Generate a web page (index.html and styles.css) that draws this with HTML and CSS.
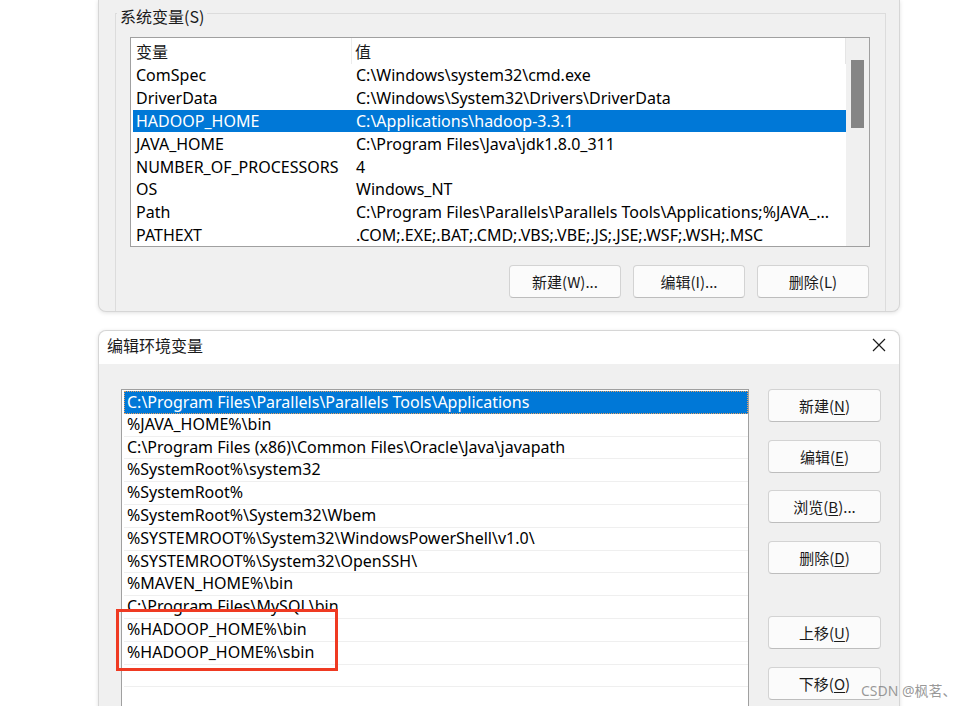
FILE: index.html
```html
<!DOCTYPE html>
<html lang="zh-CN">
<head>
<meta charset="utf-8">
<title>环境变量</title>
<link rel="stylesheet" href="styles.css">
</head>
<body>
<div class="page">
  <div class="win win-top">
    <fieldset class="group">
      <legend class="group-label">系统变量(S)</legend>
      <div class="listview">
        <div class="lv-main">
          <div class="lv-head"><span class="c1">变量</span><span class="c2">值</span></div>
          <div class="lv-row"><span class="c1">ComSpec</span><span class="c2">C:\Windows\system32\cmd.exe</span></div>
          <div class="lv-row"><span class="c1">DriverData</span><span class="c2">C:\Windows\System32\Drivers\DriverData</span></div>
          <div class="lv-row selected"><span class="c1">HADOOP_HOME</span><span class="c2">C:\Applications\hadoop-3.3.1</span></div>
          <div class="lv-row"><span class="c1">JAVA_HOME</span><span class="c2">C:\Program Files\Java\jdk1.8.0_311</span></div>
          <div class="lv-row"><span class="c1">NUMBER_OF_PROCESSORS</span><span class="c2">4</span></div>
          <div class="lv-row"><span class="c1">OS</span><span class="c2">Windows_NT</span></div>
          <div class="lv-row"><span class="c1">Path</span><span class="c2">C:\Program Files\Parallels\Parallels Tools\Applications;%JAVA_...</span></div>
          <div class="lv-row"><span class="c1">PATHEXT</span><span class="c2">.COM;.EXE;.BAT;.CMD;.VBS;.VBE;.JS;.JSE;.WSF;.WSH;.MSC</span></div>
        </div>
        <div class="vscroll"><div class="thumb"></div></div>
      </div>
      <div class="btn-row">
        <button class="btn">新建(W)...</button>
        <button class="btn">编辑(I)...</button>
        <button class="btn">删除(L)</button>
      </div>
    </fieldset>
  </div>

  <div class="win win-bottom">
    <div class="titlebar">
      <span class="title">编辑环境变量</span>
      <svg class="close" width="14" height="14" viewBox="0 0 14 14"><path d="M1 1 L13 13 M13 1 L1 13" stroke="#1a1a1a" stroke-width="1.2" fill="none"/></svg>
    </div>
    <div class="dlg-body">
      <div class="pathlist">
        <div class="p-row selected">C:\Program Files\Parallels\Parallels Tools\Applications</div>
        <div class="p-row">%JAVA_HOME%\bin</div>
        <div class="p-row">C:\Program Files (x86)\Common Files\Oracle\Java\javapath</div>
        <div class="p-row">%SystemRoot%\system32</div>
        <div class="p-row">%SystemRoot%</div>
        <div class="p-row">%SystemRoot%\System32\Wbem</div>
        <div class="p-row">%SYSTEMROOT%\System32\WindowsPowerShell\v1.0\</div>
        <div class="p-row">%SYSTEMROOT%\System32\OpenSSH\</div>
        <div class="p-row">%MAVEN_HOME%\bin</div>
        <div class="p-row">C:\Program Files\MySQL\bin</div>
        <div class="p-row">%HADOOP_HOME%\bin</div>
        <div class="p-row">%HADOOP_HOME%\sbin</div>
        <div class="p-row"></div>
        <div class="p-row"></div>
      </div>
      <div class="side-btns">
        <button class="btn">新建(<u>N</u>)</button>
        <button class="btn">编辑(<u>E</u>)</button>
        <button class="btn">浏览(<u>B</u>)...</button>
        <button class="btn">删除(<u>D</u>)</button>
        <button class="btn gap-before">上移(<u>U</u>)</button>
        <button class="btn">下移(<u>O</u>)</button>
      </div>
    </div>
    <div class="highlight"></div>
  </div>

  <div class="watermark">CSDN @枫茗、</div>
</div>
</body>
</html>
```

FILE: styles.css
```css
* { box-sizing: border-box; }

html, body {
  margin: 0;
  padding: 0;
  background: #ffffff;
}

body {
  font-family: "Noto Sans", "Noto Sans CJK SC", sans-serif;
  font-size: 16px;
  color: #000;
}

.page {
  position: relative;
  width: 965px;
  height: 706px;
  overflow: hidden;
  display: flex;
  flex-direction: column;
  gap: 18px;
}

.win {
  margin-left: 98px;
  width: 802px;
  background: #f0f0f0;
  border: 1px solid #d6d6d6;
  box-shadow: 0 1px 4px rgba(0,0,0,0.12);
}

.win-top {
  height: 312px;
  flex: none;
  border-top: none;
  border-radius: 0 0 8px 8px;
  padding: 0 13px 0 16px;
  overflow: hidden;
}

.group {
  margin: 0;
  height: 320px;
  border: 1px solid #dcdcdc;
  border-bottom: none;
  padding: 11px 15px 0 14px;
  min-width: 0;
}

.group-label {
  margin-left: -13px;
  padding: 6px 3px 0 3px;
  height: 26px;
  line-height: 20px;
  font-family: "Noto Sans CJK SC", "Noto Sans", sans-serif;
  color: #1a1a1a;
}

.listview {
  display: flex;
  height: 210px;
  background: #fff;
  border: 1px solid #a0a0a0;
}

.lv-main {
  flex: 1;
  min-width: 0;
  padding-left: 2px;
}

.lv-head {
  display: flex;
  align-items: center;
  height: 26px;
  margin-left: -2px;
  padding-left: 5px;
  border-right: 1px solid #e5e5e5;
  color: #1a1a1a;
}

.lv-head .c1 {
  font-family: "Noto Sans CJK SC", sans-serif;
  border-right: 1px solid #ececec;
  height: 26px;
  line-height: 26px;
  width: 216px;
  flex: none;
}

.lv-head .c2 {
  font-family: "Noto Sans CJK SC", sans-serif;
  padding-left: 3px;
}

.lv-row {
  display: flex;
  align-items: center;
  height: 22.8px;
  padding-left: 3px;
  white-space: nowrap;
  overflow: hidden;
}

.lv-row .c1 {
  width: 220px;
  flex: none;
}

.lv-row.selected {
  background: #0078d7;
  color: #fff;
}

.vscroll {
  width: 23px;
  flex: none;
  background: #f0f0f0;
  padding: 22px 0 0 5px;
}

.thumb {
  width: 13px;
  height: 68px;
  background: #858585;
}

.btn-row {
  display: flex;
  justify-content: flex-end;
  gap: 12px;
  margin-top: 18px;
  padding-right: 1px;
}

.btn {
  font-family: "Noto Sans CJK SC", "Noto Sans", sans-serif;
  font-size: 15px;
  color: #1a1a1a;
  background: #fbfbfb;
  border: 1px solid #d3d3d3;
  border-bottom-color: #bdbdbd;
  border-radius: 4px;
  height: 33px;
  width: 112px;
  padding: 0;
}

.btn u {
  text-decoration-thickness: 1px;
  text-underline-offset: 2px;
}

.win-bottom {
  position: relative;
  flex: 1;
  border-bottom: none;
  border-radius: 8px 8px 0 0;
}

.titlebar {
  height: 33px;
  background: #fff;
  border-radius: 8px 8px 0 0;
  display: flex;
  align-items: center;
  justify-content: space-between;
  padding: 0 13px 5px 8px;
}

.title {
  font-family: "Noto Sans CJK SC", sans-serif;
  color: #1a1a1a;
}

.close {
  display: block;
}

.dlg-body {
  display: flex;
  padding: 25px 18px 0 22px;
  gap: 19px;
}

.pathlist {
  width: 628px;
  height: 400px;
  flex: none;
  background: #fff;
  border: 1px solid #a0a0a0;
  padding: 1px 0 0 2px;
}

.p-row {
  height: 22.8px;
  line-height: 21.8px;
  padding-left: 3px;
  border-bottom: 1px solid #efefef;
  white-space: nowrap;
}

.p-row.selected {
  background: #0078d7;
  color: #fff;
  border: 1px dotted #e8a060;
  padding-left: 2px;
}

.side-btns {
  display: flex;
  flex-direction: column;
  gap: 17.5px;
  padding-top: 0;
}

.side-btns .btn {
  width: 113px;
}

.side-btns .gap-before {
  margin-top: 25px;
}

.highlight {
  position: absolute;
  left: 17px;
  top: 278px;
  width: 222px;
  height: 62px;
  border: 3px solid #ef3a22;
}

.watermark {
  position: absolute;
  left: 861px;
  top: 680px;
  font-family: "Noto Sans", "Noto Sans CJK SC", sans-serif;
  font-size: 14px;
  color: rgba(120,120,120,0.75);
  white-space: nowrap;
}
```
